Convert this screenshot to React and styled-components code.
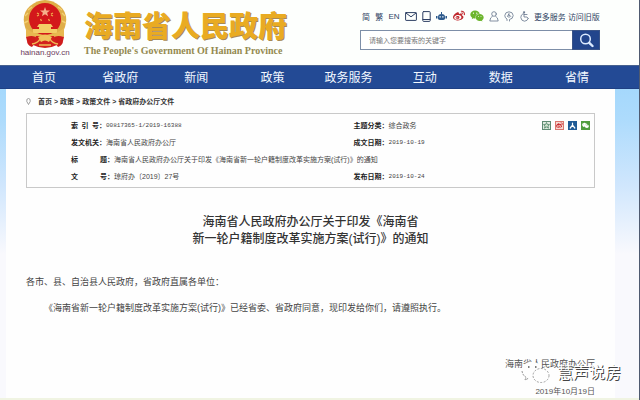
import React from "react";
import styled, { createGlobalStyle, css } from "styled-components";
import { FaWeibo, FaWeixin } from "react-icons/fa";

const GlobalStyle = createGlobalStyle`
    * {
        box-sizing: border-box;
    }

    body {
        margin: 0;
        background: #fff;
        color: #333;
        font-family: "Liberation Sans", "Noto Sans CJK SC", sans-serif;
    }
`;

// shared pieces
const plainLink = css`
    color: inherit;
    text-decoration: none;
`;

const Page = styled.div`
    position: relative;
    min-height: 100vh;
    display: flex;
    flex-direction: column;
    border-right: 1px solid #4f5a70;
`;

/* ---------- header ---------- */
const Header = styled.header`
    display: flex;
    justify-content: space-between;
    height: 65px;
    padding: 0 39px 0 20px;
    background: #fdfffd;
`;

const Brand = styled.a`
    ${plainLink}
    display: flex;
    gap: 14px;
`;

const Emblem = styled.div`
    display: flex;
    flex-direction: column;
    align-items: center;
    width: 50px;
    font-size: 8px;
    line-height: 9px;
    color: #6b3a5c;

    svg {
        display: block;
    }
`;

const BrandText = styled.div`
    padding-top: 7px;
`;

const SiteName = styled.h1`
    margin: 0;
    font-family: "Noto Sans CJK SC", sans-serif;
    font-size: 29px;
    font-weight: 900;
    line-height: 34px;
    color: #e9ab22;
    text-shadow: 1px 1px 0 #a88a55;
    white-space: nowrap;
`;

const SiteNameEn = styled.p`
    margin: 0;
    font-family: "Liberation Serif", serif;
    font-size: 10px;
    font-weight: bold;
    line-height: 20px;
    color: #948a50;
    white-space: nowrap;
`;

const Tools = styled.div`
    display: flex;
    flex-direction: column;
    gap: 5px;
    width: 240px;
    padding-top: 7px;
`;

const ToolBar = styled.div`
    display: flex;
    align-items: center;
    justify-content: space-between;
    height: 18px;
    padding-left: 2px;
    font-size: 8px;
    color: #2d3f63;
    white-space: nowrap;
`;

const TextLinks = styled.div`
    display: flex;
    gap: 2px;
`;

const ToolLink = styled.a`
    ${plainLink}
    display: block;
    color: ${(props) => props.$color || "inherit"};

    svg {
        display: block;
    }
`;

const Search = styled.form`
    display: flex;
    height: 20px;
    margin: 0;
`;

const SearchInput = styled.input`
    flex: 1;
    min-width: 0;
    padding: 0 8px;
    border: 1px solid #7d8ea8;
    border-right: 0;
    border-radius: 0;
    background: #fff;
    font-family: inherit;
    font-size: 7px;
    outline: 0;

    &::placeholder {
        color: #777;
        opacity: 1;
    }
`;

const SearchButton = styled.button`
    display: flex;
    align-items: center;
    justify-content: center;
    width: 28px;
    padding: 0;
    border: 1px solid #3a5488;
    background: #22458c;
    color: #dcebff;
`;

/* ---------- nav ---------- */
const Nav = styled.nav`
    display: flex;
    height: 24px;
    padding: 0 24px 0 6px;
    background: #234a95;
    border-top: 1px solid #47628f;
    border-bottom: 1px solid #1f4083;
`;

const NavLink = styled.a`
    ${plainLink}
    flex: 1;
    text-align: center;
    font-size: 12px;
    line-height: 24px;
    color: #f2f8ff;
`;

/* ---------- content ---------- */
const Main = styled.main`
    flex: 1;
    display: flex;
    padding: 0 24px 0 6px;
    background: linear-gradient(#a5d8fc, #addbfc 30px, #cfe6fd 95px, #f9f9fd 165px);
    border-bottom: 3px solid #f0f4e2;
`;

const Article = styled.article`
    flex: 1;
    padding: 0 20px;
    background: #fefefe;
`;

const Crumbs = styled.div`
    display: flex;
    align-items: center;
    gap: 2px;
    height: 24px;
    font-size: 7px;
    font-weight: bold;
    color: #333;

    svg {
        margin-right: 5px;
    }

    a {
        ${plainLink}
    }
`;

const InfoBox = styled.section`
    display: flex;
    padding: 3px 4px 2px 44px;
    border: 1px solid #c9c9c9;
`;

const InfoList = styled.dl`
    flex: 1;
    display: grid;
    grid-template-columns: 3fr 2fr;
    margin: 0;
    font-size: 7px;
    line-height: 17px;
`;

const InfoItem = styled.div`
    display: flex;
    white-space: nowrap;
    grid-column: ${(props) => (props.$wide ? "1 / -1" : "auto")};
`;

const Label = styled.dt`
    display: flex;
    justify-content: space-between;
    width: ${(props) => (props.$spread ? "43px" : "35px")};
    font-weight: bold;
    color: #222;
`;

const Value = styled.dd`
    margin: 0;
    color: #444;

    ${(props) =>
        props.$code &&
        css`
            font-family: "Liberation Mono", monospace;
            font-size: 6px;
        `}
`;

const Share = styled.div`
    display: flex;
    gap: 4px;
    padding-top: 4px;
`;

const ShareButton = styled.button`
    display: flex;
    align-items: center;
    justify-content: center;
    width: 9px;
    height: 9px;
    padding: 0;
    border: 1px solid ${(props) => props.$edge};
    background: ${(props) => props.$fill};
    color: ${(props) => props.$ink || "#fff"};
`;

const DocTitle = styled.h2`
    margin: 26px 0 0;
    font-size: 12px;
    font-weight: 500;
    line-height: 17px;
    text-align: center;
    color: #333;
`;

const DocBody = styled.div`
    padding-top: 26px;
    font-size: 9px;
    line-height: 17px;
    color: #444;

    p {
        margin: 0 0 9px;
    }

    p + p {
        text-indent: 2em;
    }
`;

const Signature = styled.footer`
    padding-top: 32px;
    font-size: 9px;
    line-height: 13px;
    text-align: right;
    color: #555;

    time {
        display: block;
        margin-top: 14px;
        font-size: 8px;
    }
`;

// floats over the signature
const Watermark = styled.div`
    position: absolute;
    right: 18px;
    bottom: 16px;
    display: flex;
    align-items: center;
    gap: 5px;
    font-size: 16px;
    line-height: 24px;
    color: #fff;
    text-shadow: 1px 1px 0 #444;
`;

const stroke = {
    fill: "none",
    stroke: "currentColor",
    strokeLinecap: "round",
    strokeLinejoin: "round",
};

const EmblemIcon = () => (
    <svg width="46" height="48" viewBox="0 0 46 48">
        <path d="M6 36L3 27Q-1 14 8 6Q15 0 23 0Q31 0 38 6Q47 14 43 27L39 37Z" fill="#dfae48" />
        <path d="M3 16l3-3M2 23l4-2M6 10l4-3M43 16l-3-3M44 23l-4-2M40 10l-4-3" stroke="#f3cf72" strokeWidth="1.4" />
        <circle cx="23" cy="19" r="16" fill="#d3181b" />
        <path d="M23 7l1.3 3.4 3.7.1-2.9 2.2 1 3.5-3.1-2-3.1 2 1-3.5-2.9-2.2 3.7-.1z" fill="#f5b08a" />
        <path d="M15 13l2 1M15 16l2-1M31 13l-2 1M31 16l-2-1M18.500 19l1 2M26.500 19l1 2" stroke="#f0a94a" strokeWidth="1.300" />
        <path d="M17 24h12l2 3h-2v2h6v4H11v-4h6v-2h-2z" fill="#f3cd66" />
        <path d="M4 28Q12 35 23 35Q34 35 42 28L42 37Q34 36 30 41H16Q12 36 4 37Z" fill="#e8b850" />
        <path d="M4 37Q12 34 16 39L10 47Q5 45 5 41ZM42 37Q34 34 30 39L36 47Q41 45 41 41Z" fill="#cf1d1c" />
        <path d="M14 36h18l3 9q-6 3-12 3t-12-3z" fill="#d3201d" />
        <path d="M16 37Q23 32 30 37L27 42Q23 39 19 42Z" fill="#f0c35b" />
        <path d="M10 44q6-1 8-5M36 44q-6-1-8-5M17 45h12" stroke="#eebc54" strokeWidth="1.600" fill="none" />
    </svg>
);

const MailIcon = () => (
    <svg width="12" height="9" viewBox="0 0 12 9" {...stroke}>
        <rect x=".6" y=".6" width="10.800" height="7.800" rx=".5" />
        <path d="M1.200 1.200L6 4.800L10.800 1.200" />
    </svg>
);

const TabletIcon = () => (
    <svg width="9" height="11" viewBox="0 0 9 11" {...stroke}>
        <rect x=".8" y=".6" width="7.400" height="9.800" rx=".8" />
        <path d="M1 8.500h7" />
    </svg>
);

const RobotIcon = () => (
    <svg width="11" height="10" viewBox="0 0 11 10" fill="currentColor">
        <path d="M5 1h1v2H5z" />
        <path d="M2 6Q2 3 5.500 3Q9 3 9 6V7.500Q9 9 5.500 9Q2 9 2 7.500Z" />
        <path d="M0 5h1.500v2.500H0zM9.500 5H11v2.500H9.500z" />
        <path d="M3.500 5.200h1.300v1.300H3.500zM6.200 5.200h1.300v1.300H6.200z" fill="#fff" />
    </svg>
);

const UserIcon = () => (
    <svg width="10" height="11" viewBox="0 0 10 11" {...stroke} strokeWidth=".8">
        <circle cx="5" cy="3" r="2.300" />
        <path d="M3.500 5Q1 6.500.8 10h8.400Q9 6.500 6.500 5" />
    </svg>
);

const HeadIcon = () => (
    <svg width="10" height="11" viewBox="0 0 10 11" {...stroke} strokeWidth=".8">
        <path d="M3 9.500V8Q.8 7 .8 4.500Q1 1 5 .8Q9 1 9.200 4.500Q9 8 5.500 8.500V10" />
        <path d="M3.500 5.500L5 2.500V6.500M5.500 4.500L7 5.500" />
    </svg>
);

const WheelchairIcon = () => (
    <svg width="9" height="11" viewBox="0 0 9 11" {...stroke} strokeWidth=".8">
        <path d="M3.200 2.500Q.6 4 .8 6.500Q1.200 10 4.500 10.200Q7.500 10 8.200 7.500" />
        <path d="M4 1v5h3l1.200 1.500M4 3.500h3" />
        <circle cx="4" cy="1.200" r=".6" />
    </svg>
);

const SearchIcon = () => (
    <svg width="15" height="15" viewBox="0 0 15 15" {...stroke}>
        <circle cx="6.500" cy="6" r="4.800" strokeWidth="1.500" />
        <path d="M10.300 9.800L13.500 13" strokeWidth="2.400" />
    </svg>
);

const PinIcon = () => (
    <svg width="5" height="7" viewBox="0 0 5 7" fill="none" stroke="#888" strokeWidth=".8">
        <path d="M2.500 6.500L.8 3.500Q.2 .6 2.500 .5Q4.800 .6 4.200 3.500Z" />
    </svg>
);

const StarIcon = () => (
    <svg width="7" height="7" viewBox="0 0 7 7" fill="#cfe3cc" stroke="#4f8468" strokeWidth=".8">
        <path d="M3.500 .5l.9 2 2.100.1-1.600 1.400.6 2.200-2-1.200-2 1.200.6-2.200L.5 2.600l2.100-.1z" />
    </svg>
);

const RenrenIcon = () => (
    <svg width="7" height="7" viewBox="0 0 7 7" {...stroke} strokeWidth="1.200">
        <path d="M3.500 1v2.200L1.200 6M3.500 3.200L5.800 6" />
    </svg>
);

const BubblesIcon = () => (
    <svg width="32" height="24" viewBox="0 0 32 24">
        <path d="M2 9Q2 1 12 1Q21 1 22 8Q14 10 13 17L7 17L5 20L5 15Q2 13 2 9Z" fill="#fefefe" />
        <path d="M2 10Q3 15 6 16L5 19L9 17" fill="none" stroke="#777" strokeWidth=".8" strokeDasharray="2 1" />
        <ellipse cx="21" cy="14.500" rx="8" ry="7" fill="#fefefe" stroke="#888" strokeWidth=".8" strokeDasharray="2 1.500" />
        <path d="M8 6h1.500M15 6h1.500" stroke="#555" strokeWidth="1.500" />
    </svg>
);

const navItems = ["首页", "省政府", "新闻", "政策", "政务服务", "互动", "数据", "省情"];

const crumbs = ["首页", "政策", "政策文件", "省政府办公厅文件"];

const toolIcons = [
    { name: "邮箱", icon: <MailIcon /> },
    { name: "移动版", icon: <TabletIcon /> },
    { name: "智能问答", icon: <RobotIcon />, color: "#2c5a8c" },
    { name: "微博", icon: <FaWeibo size={12} />, color: "#c0282d" },
    { name: "微信", icon: <FaWeixin size={14} />, color: "#6cb52d" },
    { name: "个人中心", icon: <UserIcon />, color: "#65758c" },
    { name: "智能服务", icon: <HeadIcon />, color: "#65758c" },
    { name: "无障碍", icon: <WheelchairIcon />, color: "#65758c" },
];

const info = [
    { label: ["索", "引", "号："], value: "00817365-1/2019-16388", code: true },
    { label: ["主题分类："], value: "综合政务" },
    { label: ["发文机关："], value: "海南省人民政府办公厅" },
    { label: ["成文日期："], value: "2019-10-19", code: true },
    {
        label: ["标", "题："],
        value: "海南省人民政府办公厅关于印发《海南省新一轮户籍制度改革实施方案(试行)》的通知",
        wide: true,
    },
    { label: ["文", "号："], value: "琼府办〔2019〕27号" },
    { label: ["发布日期："], value: "2019-10-24", code: true },
];

const App = () => {
    return (
        <Page lang="zh-CN">
            <GlobalStyle />
            <Header>
                <Brand href="#">
                    <Emblem>
                        <EmblemIcon />
                        hainan.gov.cn
                    </Emblem>
                    <BrandText>
                        <SiteName>海南省人民政府</SiteName>
                        <SiteNameEn>The People's Government Of Hainan Province</SiteNameEn>
                    </BrandText>
                </Brand>
                <Tools>
                    <ToolBar>
                        <ToolLink href="#">简</ToolLink>
                        <ToolLink href="#">繁</ToolLink>
                        <ToolLink href="#">EN</ToolLink>
                        {toolIcons.map((tool) => (
                            <ToolLink key={tool.name} href="#" aria-label={tool.name} $color={tool.color}>
                                {tool.icon}
                            </ToolLink>
                        ))}
                        <TextLinks>
                            <ToolLink href="#">更多服务</ToolLink>
                            <ToolLink href="#">访问旧版</ToolLink>
                        </TextLinks>
                    </ToolBar>
                    <Search onSubmit={(e) => e.preventDefault()}>
                        <SearchInput type="text" aria-label="搜索" placeholder="请输入您要搜索的关键字" />
                        <SearchButton type="submit" aria-label="搜索">
                            <SearchIcon />
                        </SearchButton>
                    </Search>
                </Tools>
            </Header>

            <Nav>
                {navItems.map((item) => (
                    <NavLink key={item} href="#">{item}</NavLink>
                ))}
            </Nav>

            <Main>
                <Article>
                    <Crumbs>
                        <PinIcon />
                        {crumbs.map((crumb, i) => (
                            <React.Fragment key={crumb}>
                                {i > 0 && <span>&gt;</span>}
                                <a href="#">{crumb}</a>
                            </React.Fragment>
                        ))}
                    </Crumbs>

                    <InfoBox>
                        <InfoList>
                            {info.map((item) => (
                                <InfoItem key={item.label.join("")} $wide={item.wide}>
                                    <Label $spread={item.label.length === 2}>
                                        {item.label.map((part) => (
                                            <span key={part}>{part}</span>
                                        ))}
                                    </Label>
                                    <Value $code={item.code}>{item.value}</Value>
                                </InfoItem>
                            ))}
                        </InfoList>
                        <Share>
                            <ShareButton aria-label="收藏" $edge="#5f8a72" $fill="#dfeadf">
                                <StarIcon />
                            </ShareButton>
                            <ShareButton aria-label="分享到微博" $edge="#d9776f" $fill="#f7d9d2" $ink="#c8262b">
                                <FaWeibo size={7} />
                            </ShareButton>
                            <ShareButton aria-label="分享到人人网" $edge="#1f5b96" $fill="#1f5b96">
                                <RenrenIcon />
                            </ShareButton>
                            <ShareButton aria-label="分享到微信" $edge="#4f9c3d" $fill="#4f9c3d">
                                <FaWeixin size={7} />
                            </ShareButton>
                        </Share>
                    </InfoBox>

                    <DocTitle>
                        海南省人民政府办公厅关于印发《海南省
                        <br />
                        新一轮户籍制度改革实施方案(试行)》的通知
                    </DocTitle>

                    <DocBody>
                        <p>各市、县、自治县人民政府，省政府直属各单位：</p>
                        <p>《海南省新一轮户籍制度改革实施方案(试行)》已经省委、省政府同意，现印发给你们，请遵照执行。</p>
                    </DocBody>

                    <Signature>
                        海南省人民政府办公厅
                        <time dateTime="2019-10-19">2019年10月19日</time>
                    </Signature>
                </Article>
            </Main>

            <Watermark>
                <BubblesIcon />
                慧声说房
            </Watermark>
        </Page>
    );
};

export default App;
